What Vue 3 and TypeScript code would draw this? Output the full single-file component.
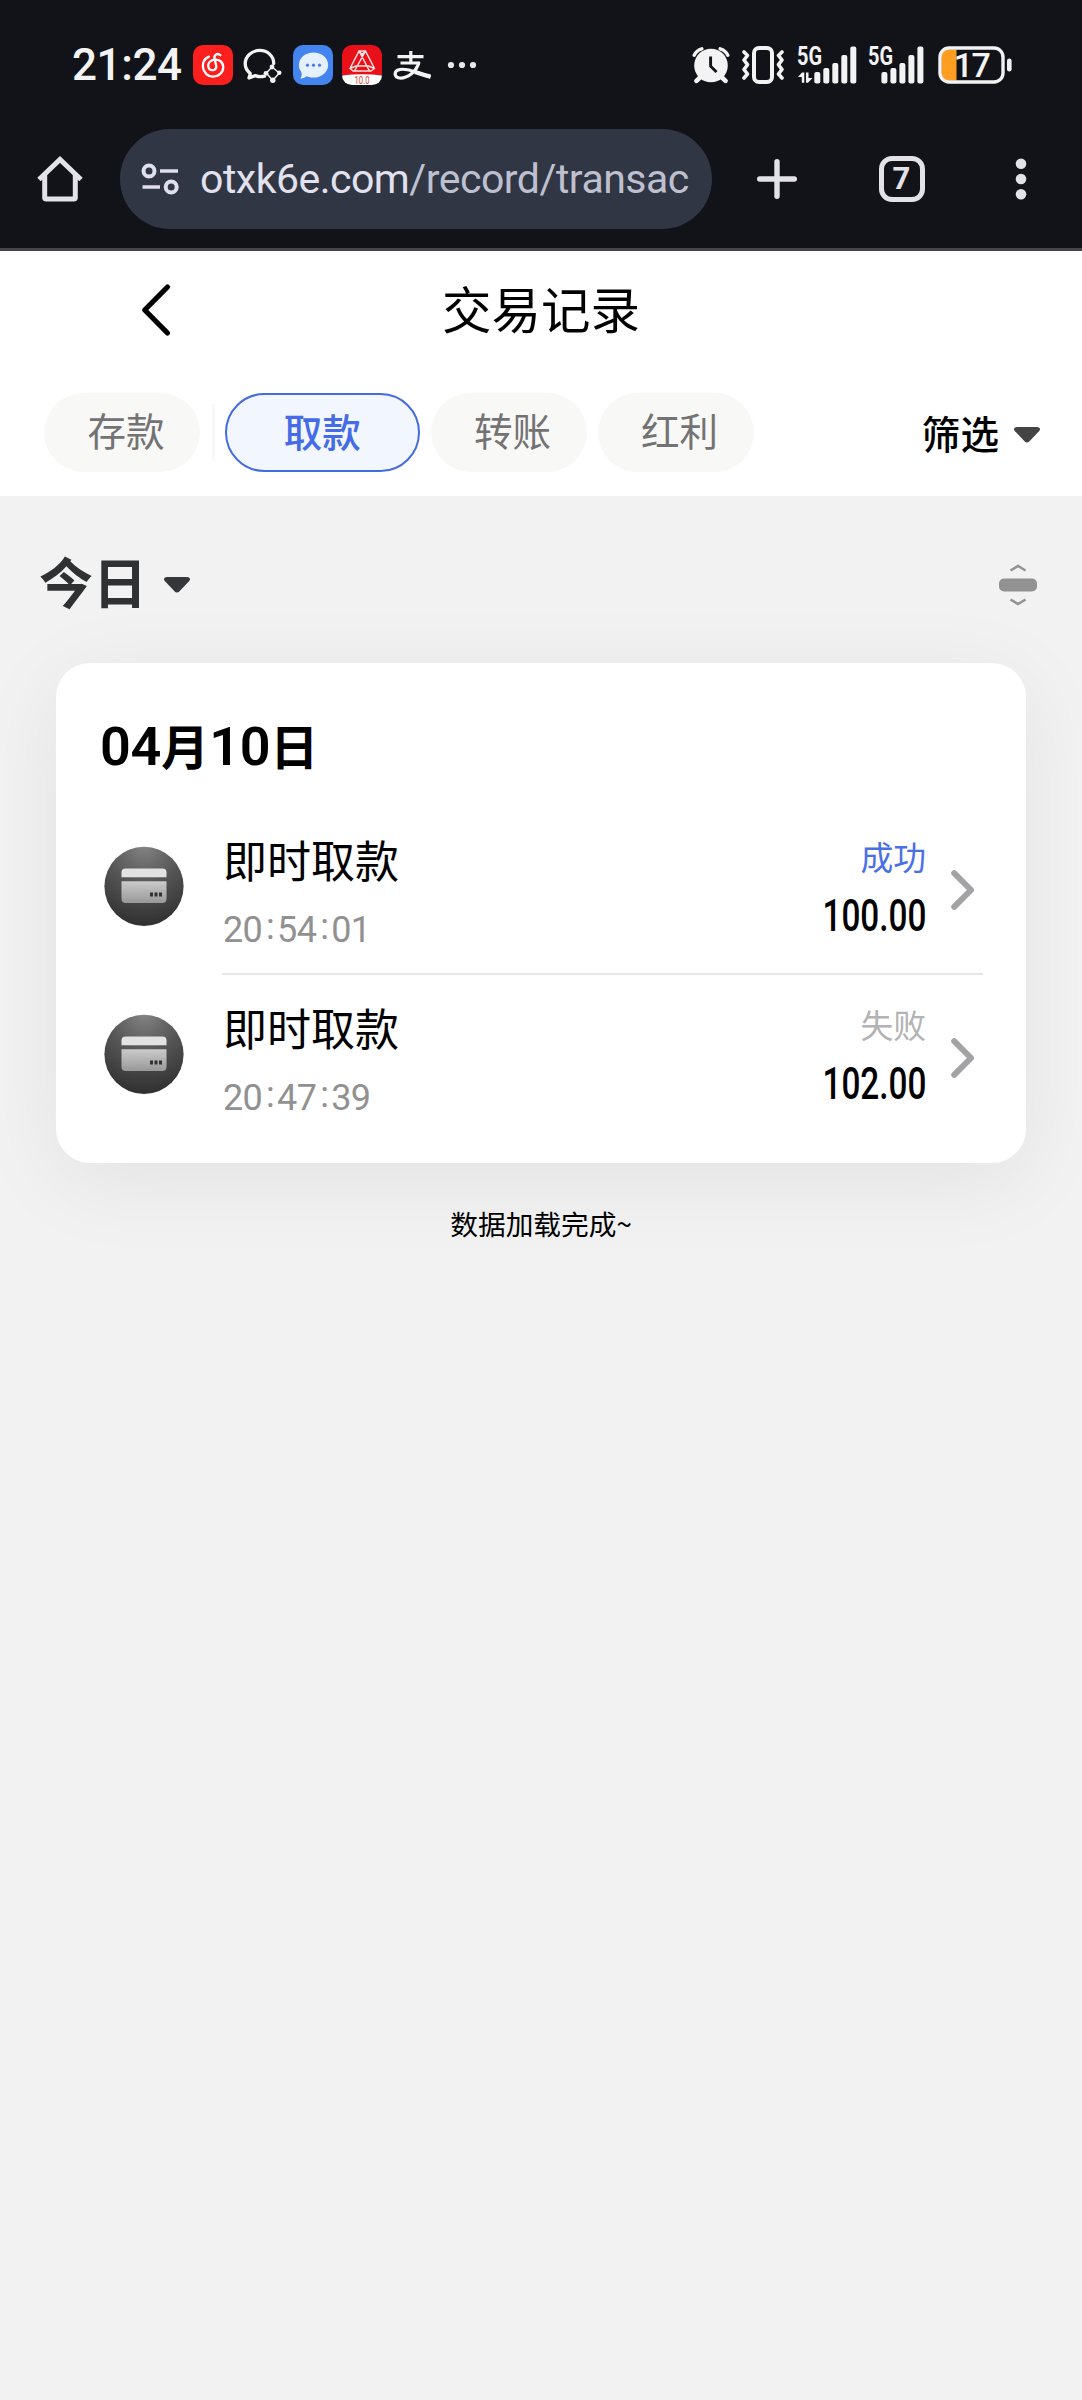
<script setup lang="ts">
interface Tab {
  label: string
  active: boolean
}

interface TransactionRow {
  title: string
  time: string[]
  status: string
  amount: string
  success: boolean
}

const leadingTab: Tab = { label: '存款', active: false }
const tabs: Tab[] = [
  { label: '取款', active: true },
  { label: '转账', active: false },
  { label: '红利', active: false },
]

const rows: TransactionRow[] = [
  { title: '即时取款', time: ['20', '54', '01'], status: '成功', amount: '100.00', success: true },
  { title: '即时取款', time: ['20', '47', '39'], status: '失败', amount: '102.00', success: false },
]

// Left edge and height of every signal bar
const bars = [
  { x: 0, h: 11.5 },
  { x: 9, h: 15.5 },
  { x: 18, h: 20.5 },
  { x: 27, h: 28.5 },
  { x: 36, h: 37 },
]
</script>

<template>
  <div class="screen">
    <header class="browser">
      <div class="status">
        <span class="clock">21:24</span>
        <div class="notices">
          <svg width="40" height="40" viewBox="0 0 40 40">
            <rect width="40" height="40" rx="10" fill="#fb201d" />
            <path d="M15.8 11.6C11.5 13.7 9.4 18 9.9 22.2C10.5 27.7 15 31.8 20.4 31.6C26.3 31.4 30.5 27 30.2 21.7C29.9 16.6 25.5 13.9 21.3 14.7C17 15.5 15 18.4 15.2 21C15.5 24 17.5 25.2 19.5 25.2C22 25.2 23.6 23.3 23.2 20.8L21.5 13.2C20.9 9.8 24.5 7.4 27.4 10.3" fill="none" stroke="#fff" stroke-width="2.3" stroke-linecap="round" />
          </svg>
          <svg width="40" height="40" viewBox="0 0 40 40" fill="none">
            <path d="M30.7 18.5C30.8 11 24.4 5.4 16.8 5.4C9 5.4 2.2 11 2.2 18.6C2.2 23 4.2 26.2 7.3 28.6L6 33L12.3 30.6C15 31.7 18.5 32 21.5 31.2" stroke="#f3f3f4" stroke-width="3.3" stroke-linejoin="round" stroke-linecap="round" />
            <path d="M29 22L36.3 28L29.7 35.5L23.3 28Z" stroke="#f3f3f4" stroke-width="1.4" />
            <circle cx="29" cy="22" r="2.4" fill="#f3f3f4" />
            <circle cx="36.3" cy="27.8" r="2.2" fill="#f3f3f4" />
            <circle cx="29.8" cy="35.2" r="2.7" fill="#f3f3f4" />
            <circle cx="23" cy="28.3" r="2.4" fill="#f3f3f4" />
          </svg>
          <svg width="40" height="40" viewBox="0 0 40 40">
            <rect width="40" height="40" rx="10" fill="#4484ee" />
            <ellipse cx="20.5" cy="20" rx="14.6" ry="12.6" fill="#e6f1ff" />
            <path d="M8 26C9.5 29 8.5 31.5 7.4 33.6C10.5 33.4 13 32 15 30Z" fill="#e6f1ff" />
            <circle cx="14.5" cy="20.2" r="1.6" fill="#4a7fd6" />
            <circle cx="20.5" cy="20.2" r="1.6" fill="#4a7fd6" />
            <circle cx="26.5" cy="20.2" r="1.6" fill="#4a7fd6" />
          </svg>
          <svg width="40" height="40" viewBox="0 0 40 40">
            <path d="M0 30V10A10 10 0 0 1 10 0H30A10 10 0 0 1 40 10V30Z" fill="#e91019" />
            <path d="M0 30.5Q20 28 40 30.5A10 9.5 0 0 1 30 40H10A10 9.5 0 0 1 0 30.5Z" fill="#fff" />
            <path d="M17 6H23.5L20 9.5ZM17 6L8 23.5L11 26H29L32.5 23.5L23.5 6M17 6L27.5 26M23.5 6L12.5 26M8 23.5L14 21H26.5L32.5 23.5" fill="none" stroke="#ffe3df" stroke-width="1.5" stroke-linejoin="round" />
            <text x="20" y="39" text-anchor="middle" class="badge-text" textLength="15" lengthAdjust="spacingAndGlyphs">10.0</text>
          </svg>
          <svg width="40" height="40" viewBox="0 0 40 40" fill="none" stroke="#f3f3f4">
            <path d="M5.5 11.7H31.5M18.8 6V17M8.5 18H28" stroke-width="3.2" />
            <path d="M27 17C24.5 27 15 33.5 7.5 33C2.5 32.5 1.8 27.5 5.5 25.2C13 21.8 25 28 38.5 32" stroke-width="3.2" />
            <path d="M23 27C28 28.7 33 30.3 38.5 31.6" stroke-width="4.4" />
          </svg>
          <svg class="more" width="30" height="40" viewBox="0 0 30 40" fill="#e8e8ea">
            <circle cx="4" cy="20" r="3.1" />
            <circle cx="15" cy="20" r="3.1" />
            <circle cx="26" cy="20" r="3.1" />
          </svg>
        </div>
        <div class="system">
          <svg width="38" height="38" viewBox="0 0 38 38">
            <g fill="none" stroke="#f3f3f4" stroke-linecap="round">
              <path d="M2.2 9.2Q4.5 4.2 9.8 2.8M28.2 2.8Q33.5 4.2 35.8 9.2" stroke-width="3.4" />
              <path d="M8.5 31L4.5 34.8M29.5 31L33.5 34.8" stroke-width="4.6" />
            </g>
            <circle cx="19" cy="19.5" r="16.8" fill="#f3f3f4" />
            <path d="M18.6 10.5V20.2L24.5 26" fill="none" stroke="#121318" stroke-width="2.9" />
          </svg>
          <svg class="vibrate" width="44" height="38" viewBox="0 0 44 38" fill="none" stroke="#f3f3f4">
            <rect x="13" y="2" width="18" height="34" rx="5" stroke-width="4" />
            <path d="M3 6L6.5 9.5L3 14L6.5 18.7L3 23.5L6.5 28L3 32M41 6L37.5 9.5L41 14L37.5 18.7L41 23.5L37.5 28L41 32" stroke-width="3.6" stroke-linejoin="round" stroke-linecap="round" />
          </svg>
          <svg class="signal-data" width="60" height="54" viewBox="0 -8 60 54" fill="#f3f3f4">
            <text x="0" y="19" class="net" textLength="25" lengthAdjust="spacingAndGlyphs">5G</text>
            <path d="M1 31L5 26.5H7.3V36.8H4.8V31ZM9 26.5H11.5V32H15.5L11 36.8H9Z" />
            <rect v-for="bar in bars" :key="bar.x" :x="bar.x + 17.3" :y="37.5 - bar.h" width="6" :height="bar.h" rx="2" />
          </svg>
          <svg class="signal" width="56" height="54" viewBox="0 -8 56 54" fill="#f3f3f4">
            <text x="0" y="19" class="net" textLength="25" lengthAdjust="spacingAndGlyphs">5G</text>
            <rect v-for="bar in bars" :key="bar.x" :x="bar.x + 13.4" :y="37.5 - bar.h" width="6" :height="bar.h" rx="2" />
          </svg>
          <svg class="battery" width="74" height="38" viewBox="0 0 74 38">
            <path d="M18.5 3.5V34.5H10A6.5 6.5 0 0 1 3.5 28V10A6.5 6.5 0 0 1 10 3.5Z" fill="#ff9d20" />
            <rect x="2" y="2" width="63" height="34" rx="9" fill="none" stroke="#f3f3f4" stroke-width="3.4" />
            <rect x="69" y="12.5" width="4.6" height="13" rx="2.3" fill="#f3f3f4" />
            <text x="33.5" y="30.7" text-anchor="middle" class="charge">17</text>
          </svg>
        </div>
      </div>
      <div class="toolbar">
        <svg class="home" width="46" height="48" viewBox="0 0 46 48" fill="none" stroke="#e3e2e9" stroke-width="5">
          <path d="M2 24.5L23 4.5L44 24.5" />
          <path d="M7.7 20V42.5Q7.7 44 9.2 44H36.8Q38.3 44 38.3 42.5V20" />
        </svg>
        <div class="address">
          <svg width="40" height="36" viewBox="0 0 40 36" fill="none" stroke="#dfe0ec" stroke-width="4">
            <circle cx="9" cy="10" r="5.5" />
            <circle cx="31.2" cy="26" r="5.5" />
            <path d="M20 10H38M2.5 26H20" stroke-width="3.6" />
          </svg>
          <span class="url">otxk6e.com<span class="path">/record/transac</span></span>
        </div>
        <svg class="plus" width="42" height="42" viewBox="0 0 42 42" stroke="#e3e2e9" stroke-width="5.4" stroke-linecap="round">
          <path d="M21 3.7V38.3M3.7 21H38.3" />
        </svg>
        <span class="tab-count">7</span>
        <svg class="menu" width="12" height="42" viewBox="0 0 12 42" fill="#e3e2e9">
          <circle cx="6" cy="5.7" r="5.3" />
          <circle cx="6" cy="21" r="5.3" />
          <circle cx="6" cy="36.3" r="5.3" />
        </svg>
      </div>
    </header>

    <section class="top">
      <div class="titlebar">
        <svg class="back" width="32" height="54" viewBox="0 0 32 54" fill="none" stroke="#000" stroke-width="5.2" stroke-linecap="round" stroke-linejoin="round">
          <path d="M27.5 4L4.7 27L27.5 50" />
        </svg>
        <h1>交易记录</h1>
      </div>
      <nav class="tabs">
        <span class="tab">{{ leadingTab.label }}</span>
        <i class="split"></i>
        <span v-for="tab in tabs" :key="tab.label" class="tab" :class="{ active: tab.active }">{{ tab.label }}</span>
        <span class="filter">
          筛选
          <svg width="26" height="16" viewBox="0 0 26 16" fill="#444">
            <path d="M3 0H23C26 0 26.8 2.3 25 4.2L15.5 14.2Q13 16.6 10.5 14.2L1 4.2C-.8 2.3 0 0 3 0Z" />
          </svg>
        </span>
      </nav>
    </section>

    <main>
      <div class="range">
        <span class="today">今日</span>
        <svg width="26" height="16" viewBox="0 0 26 16" fill="#35373a">
          <path d="M3 0H23C26 0 26.8 2.3 25 4.2L15.5 14.2Q13 16.6 10.5 14.2L1 4.2C-.8 2.3 0 0 3 0Z" />
        </svg>
        <svg class="collapse" width="40" height="42" viewBox="0 0 40 42">
          <rect x="1" y="14.5" width="38" height="13" rx="5" fill="#929292" />
          <path d="M12.5 6.5L20 2L27.5 6.5M12.5 35.5L20 40L27.5 35.5" fill="none" stroke="#929292" stroke-width="2.5" />
        </svg>
      </div>

      <section class="card">
        <h2><b>04</b>月<b>10</b>日</h2>
        <article v-for="(row, index) in rows" :key="index" class="row">
          <svg class="icon" width="80" height="81" viewBox="0 0 80 81">
            <defs>
              <radialGradient id="disc" cx=".5" cy="0" r="1">
                <stop offset="0" stop-color="#828282" />
                <stop offset=".45" stop-color="#575757" />
                <stop offset="1" stop-color="#303030" />
              </radialGradient>
              <linearGradient id="plate" x1="0" y1="0" x2="0" y2="1">
                <stop offset="0" stop-color="#cbcbcb" />
                <stop offset="1" stop-color="#989898" />
              </linearGradient>
            </defs>
            <circle cx="40" cy="40.3" r="39.6" fill="url(#disc)" />
            <path d="M17.5 31.3V26.5Q17.5 22.5 21.5 22.5H58.5Q62.5 22.5 62.5 26.5V31.3Z" fill="#e2e2e2" />
            <path d="M17.5 35.3H62.5V53Q62.5 57 58.5 57H21.5Q17.5 57 17.5 53Z" fill="url(#plate)" />
            <path d="M46 48.5H49M50.5 48.5H53.5M55 48.5H58" stroke="#333" stroke-width="4" />
          </svg>
          <div class="body">
            <div class="info">
              <span class="name">{{ row.title }}</span>
              <span class="time">
                <template v-for="(part, i) in row.time" :key="i"><i v-if="i > 0">:</i>{{ part }}</template>
              </span>
            </div>
            <div class="result">
              <span class="state" :class="{ ok: row.success }">{{ row.status }}</span>
              <span class="amount">{{ row.amount }}</span>
            </div>
            <svg class="go" width="26" height="42" viewBox="0 0 26 42" fill="none" stroke="#a3a3a6" stroke-width="6" stroke-linecap="round" stroke-linejoin="round">
              <path d="M4.2 4.2L21 21L4.2 37.8" />
            </svg>
          </div>
        </article>
      </section>

      <p class="end">数据加载完成~</p>
    </main>
  </div>
</template>

<style>
body {
  background: #f2f2f2;
}
</style>

<style scoped>
.screen {
  width: 1082px;
  min-height: 2400px;
  background: #f2f2f2;
  color: #000;
  font-family: "Noto Sans CJK SC", sans-serif;
}
svg {
  display: block;
  flex: none;
}
.browser {
  box-sizing: border-box;
  height: 251px;
  background: #121318;
  border-bottom: 3px solid #45464c;
}
.status {
  display: flex;
  align-items: center;
  height: 129px;
  padding: 0 70px 0 72px;
}
.clock {
  width: 121px;
  font: 500 44px/50px Roboto, sans-serif;
  letter-spacing: -0.4px;
  color: #f3f3f4;
}
.notices {
  display: flex;
  gap: 9.8px;
}
.more {
  margin-left: 5px;
}
.system {
  display: flex;
  align-items: center;
  margin-left: auto;
}
.vibrate {
  margin-left: 11px;
}
.signal-data {
  margin-left: 12px;
}
.signal {
  margin-left: 11px;
}
.battery {
  margin-left: 14px;
}
.badge-text {
  font: 10px Roboto, sans-serif;
  fill: #d5432f;
}
.net {
  font: 700 25px Roboto, sans-serif;
}
.charge {
  font: 500 34px Roboto, sans-serif;
  letter-spacing: -1.5px;
  fill: #f3f3f4;
}
.toolbar {
  display: flex;
  align-items: center;
  height: 100px;
  padding-left: 37px;
}
.address {
  box-sizing: border-box;
  display: flex;
  align-items: center;
  width: 592px;
  height: 100px;
  margin-left: 37px;
  padding-left: 20px;
  border-radius: 50px;
  background: #313644;
}
.url {
  margin-left: 20px;
  font: 41px/50px Roboto, sans-serif;
  letter-spacing: -0.5px;
  white-space: nowrap;
  color: #e1e2ee;
}
.path {
  color: #bec0d0;
}
.plus {
  margin-left: 44px;
}
.tab-count {
  box-sizing: border-box;
  width: 46px;
  height: 46px;
  margin-left: 80.5px;
  border: 5px solid #e3e2e9;
  border-radius: 13px;
  font: 700 31px/36px Roboto, sans-serif;
  text-align: center;
  color: #e3e2e9;
}
.menu {
  margin-left: 90.5px;
}
.top {
  height: 245px;
  background: #fff;
}
.titlebar {
  display: grid;
  grid-template-columns: 140px 1fr 140px;
  align-items: center;
  height: 118px;
}
.back {
  grid-column: 2;
  grid-row: 1;
}
h1 {
  grid-column: 2;
  grid-row: 1;
  margin: 0 0 5px;
  font-size: 49.5px;
  line-height: 60px;
  font-weight: 400;
  text-align: center;
}
.tabs {
  display: flex;
  align-items: center;
  height: 79px;
  margin-top: 24px;
  padding: 0 42px 0 44px;
}
.tab {
  box-sizing: border-box;
  width: 156px;
  height: 79px;
  margin-right: 11px;
  padding-left: 8px;
  border-radius: 40px;
  background: #f8f8f7;
  font-size: 38.6px;
  line-height: 73px;
  text-align: center;
  color: #737373;
}
.tab.active {
  width: 194.5px;
  padding-left: 0;
  border: 2.5px solid #456be0;
  background: #f2f7ff;
  font-weight: 500;
  line-height: 71px;
  color: #456be6;
}
.split {
  width: 3px;
  height: 57px;
  margin: 0 10px 0 1px;
  background: #f8f8f8;
}
.filter {
  display: flex;
  align-items: center;
  gap: 15px;
  margin-left: auto;
  font-size: 38.6px;
  line-height: 60px;
  font-weight: 500;
  transform: translateY(-1px);
}
.filter svg {
  margin-top: 7px;
}
.range {
  display: flex;
  align-items: center;
  height: 167px;
  padding: 0 44px 0 39px;
}
.today {
  margin-right: 17px;
  padding-top: 2px;
  font-size: 54px;
  line-height: 70px;
  font-weight: 700;
  color: #303133;
}
.range svg {
  margin-top: 11px;
}
.range .collapse {
  margin-left: auto;
}
.card {
  box-sizing: border-box;
  width: 970px;
  height: 500px;
  margin-left: 56px;
  padding: 48px 43px 0 44px;
  border-radius: 34px;
  background: #fff;
  box-shadow: 0 18px 90px rgba(0, 0, 0, 0.065);
}
h2 {
  margin: 0 0 36px;
  height: 66px;
  font-size: 48px;
  line-height: 66px;
  font-weight: 700;
  white-space: nowrap;
}
h2 b {
  font: 600 54px/60px Roboto, sans-serif;
  letter-spacing: -0.3px;
}
.row {
  display: flex;
  height: 168px;
}
.icon {
  margin: 33px 0 0 4px;
}
.body {
  display: flex;
  flex: 1;
  margin: -7px 0 6px 38px;
  padding-top: 7px;
  border-bottom: 2px solid #e6e6e6;
}
.row:last-child .body {
  border-bottom-color: transparent;
}
.info {
  display: flex;
  flex-direction: column;
  padding-left: 1px;
}
.name {
  margin-top: 16px;
  font-size: 44px;
  line-height: 60px;
}
.time {
  margin-top: 19px;
  font: 36px/44px Roboto, sans-serif;
  letter-spacing: -0.7px;
  color: #919191;
}
.time i {
  margin: 0 3px 0 4px;
  font-style: normal;
  vertical-align: 3px;
  line-height: 1;
}
.result {
  display: flex;
  flex-direction: column;
  align-items: flex-end;
  margin-left: auto;
}
.state {
  margin-top: 21px;
  font-size: 32.8px;
  line-height: 44px;
  color: #b3b3b3;
}
.state.ok {
  color: #4a70e8;
}
.amount {
  margin-top: 11px;
  font: 500 45px/54px Roboto, sans-serif;
  transform: scaleX(0.74);
  transform-origin: 100% 50%;
}
.go {
  margin: 56px 7px 0 24px;
}
.end {
  margin: 40px 0 0;
  font-size: 27.7px;
  line-height: 40px;
  text-align: center;
}
</style>
